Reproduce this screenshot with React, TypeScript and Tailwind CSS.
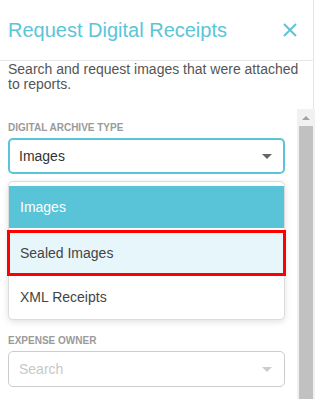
const Caret = ({ color }: { color: string }) => (
  <svg width="10" height="5" viewBox="0 0 10 5" className="shrink-0">
    <path d="M0 0 L10 0 L5 5 Z" fill={color} />
  </svg>
);

const options = ["Images", "Sealed Images", "XML Receipts"];

export default function App() {
  return (
    <div className="h-[399px] w-[315px] overflow-hidden bg-white font-['Liberation_Sans',Arial,sans-serif]">
      <div className="w-[314px] border-r border-[#e6e6e6]">
        <div className="flex h-[61px] items-center justify-between border-b border-[#e6e6e6] pl-2 pr-[16px]">
          <h1 className="text-[20px] leading-none text-[#5bc5d8]">Request Digital Receipts</h1>
          <svg width="14" height="14" viewBox="0 0 14 14">
            <path d="M1 1 L13 13 M13 1 L1 13" stroke="#5bc5d8" strokeWidth="2" />
          </svg>
        </div>
        <p className="h-[48px] px-2 pt-[1px] text-[14px] leading-[15px] text-[#555]">
          Search and request images that were attached to reports.
        </p>
      </div>

      <div className="flex h-[291px]">
        <div className="w-[297px] pl-2 pr-3">
          <div className="pt-[14px] text-[10px] font-bold uppercase leading-none text-[#9a9a9a]">
            Digital Archive Type
          </div>
          <div className="mt-[5px] flex h-[36px] items-center justify-between rounded-[5px] border-2 border-[#5bc5d8] pl-[9px] pr-[11px]">
            <span className="text-[14px] text-[#333]">Images</span>
            <Caret color="#666" />
          </div>

          <div className="mt-[7px] rounded-[5px] border border-[#dcdcdc] bg-white pt-[4px] shadow-[0_2px_6px_rgba(0,0,0,0.12)]">
            {options.map((o, i) => (
              <div
                key={o}
                className={
                  i === 0
                    ? "flex h-[42px] items-center bg-[#59c4d8] pl-[11px] text-[14px] text-white"
                    : i === 1
                      ? "-mx-[2px] mt-[2px] flex h-[46px] items-center border-[3px] border-[#ff0000] bg-[#e7f6fa] pl-[10px] text-[14px] text-[#444]"
                      : "flex h-[43px] items-center pl-[11px] text-[14px] text-[#444]"
                }
              >
                {o}
              </div>
            ))}
          </div>

          <div className="mt-[16px] text-[10px] font-bold uppercase leading-none text-[#9a9a9a]">
            Expense Owner
          </div>
          <div className="mt-[5px] flex h-[36px] items-center justify-between rounded-[5px] border border-[#cccccc] pl-[10px] pr-[12px]">
            <span className="text-[14px] text-[#c8c8c8]">Search</span>
            <Caret color="#cccccc" />
          </div>
        </div>

        <div className="flex w-[18px] flex-col bg-[#f1f1f1]">
          <div className="flex h-[17px] items-center justify-center">
            <svg width="8" height="4" viewBox="0 0 8 4">
              <path d="M0 4 L8 4 L4 0 Z" fill="#a3a3a3" />
            </svg>
          </div>
          <div className="mx-[2px] flex-1 bg-[#c1c1c1]" />
        </div>
      </div>
    </div>
  );
}
